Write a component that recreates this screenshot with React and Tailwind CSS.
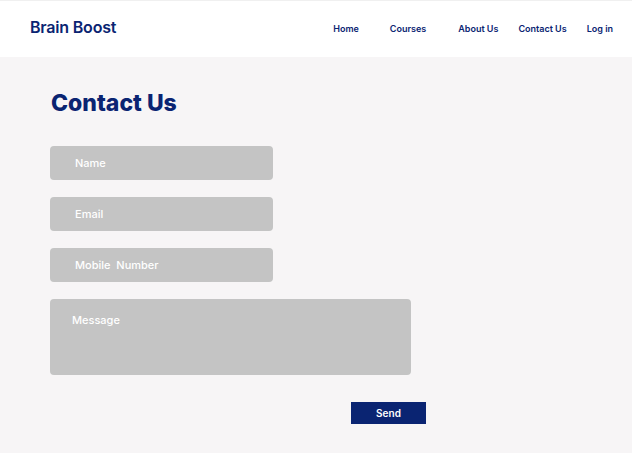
import React from "react";

function Header() {
  return (
    <header className="h-[57px] bg-white border-t border-[#f0f0f0] flex items-center justify-between pl-[30px] pr-[19px]">
      <h1 className="text-[16px] font-semibold text-[#0a2472] -mt-[4px] tracking-[-0.2px]">Brain Boost</h1>
      <nav className="flex items-center text-[9px] font-semibold text-[#0a2472]">
        <a className="mr-[31px]">Home</a>
        <a className="mr-[32px]">Courses</a>
        <a className="mr-[20px]">About Us</a>
        <a className="mr-[20px]">Contact Us</a>
        <a>Log in</a>
      </nav>
    </header>
  );
}

function Field({ label }) {
  return (
    <div className="w-[223px] h-[34px] rounded-[4px] bg-[#c4c4c4] flex items-center pl-[25px] text-[11px] font-medium text-white whitespace-pre">
      {label}
    </div>
  );
}

export default function App() {
  return (
    <div className="min-h-[453px] bg-[#f7f5f6]" style={{ fontFamily: "Inter, 'Noto Sans', sans-serif" }}>
      <Header />
      <main className="pl-[50px] pt-[32px]">
        <h2 className="text-[23px] font-extrabold text-[#0a2472] leading-[28px] ml-px">Contact Us</h2>

        {/* Form */}
        <div className="mt-[29px] flex flex-col gap-[17px]">
          <Field label="Name" />
          <Field label="Email" />
          <Field label="Mobile  Number" />
          <div className="w-[361px] h-[76px] rounded-[4px] bg-[#c4c4c4] pl-[22px] pt-[14px] text-[11px] font-medium text-white leading-[14px]">
            Message
          </div>
        </div>

        <button className="mt-[27px] ml-[301px] w-[75px] h-[22px] bg-[#0a2472] text-white text-[10px] font-semibold">
          Send
        </button>
      </main>
    </div>
  );
}
